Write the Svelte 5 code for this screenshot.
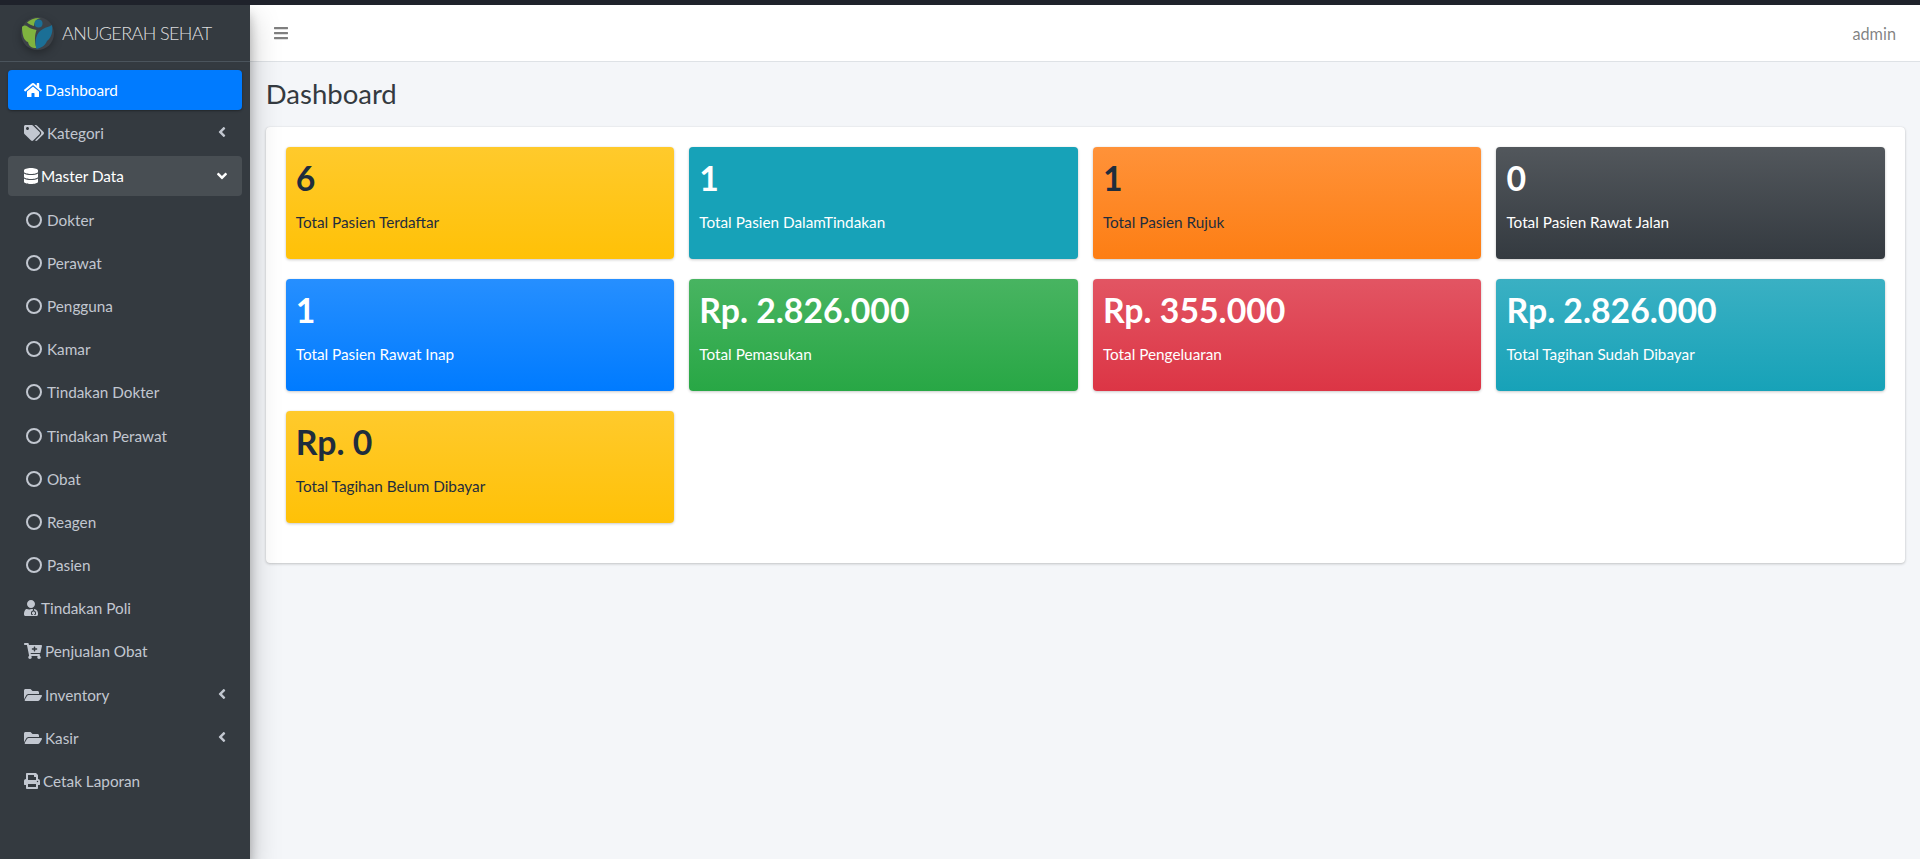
<script>
  const icons = {
    home: 'M280.37 148.26L96 300.11V464a16 16 0 0 0 16 16l112.06-.29a16 16 0 0 0 15.92-16V368a16 16 0 0 1 16-16h64a16 16 0 0 1 16 16v95.64a16 16 0 0 0 16 16.05L464 480a16 16 0 0 0 16-16V300L295.67 148.26a12.19 12.19 0 0 0-15.3 0zM571.6 251.47L488 182.56V44.05a12 12 0 0 0-12-12h-56a12 12 0 0 0-12 12v72.61L318.47 43a48 48 0 0 0-61 0L4.34 251.47a12 12 0 0 0-1.6 16.9l25.5 31A12 12 0 0 0 45.15 301l235.22-193.74a12.19 12.19 0 0 1 15.3 0L530.9 301a12 12 0 0 0 16.9-1.6l25.5-31a12 12 0 0 0-1.7-16.93z',
    tags: 'M497.941 225.941L286.059 14.059A48 48 0 0 0 252.118 0H48C21.49 0 0 21.49 0 48v204.118a48 48 0 0 0 14.059 33.941l211.882 211.882c18.744 18.745 49.136 18.746 67.882 0l204.118-204.118c18.745-18.745 18.745-49.137 0-67.882zM112 160c-26.51 0-48-21.49-48-48s21.49-48 48-48 48 21.49 48 48-21.49 48-48 48zm513.941 133.823L421.823 497.941c-18.745 18.745-49.137 18.745-67.882 0l-.36-.36L527.64 323.522c16.999-16.999 26.36-39.6 26.36-63.64s-9.362-46.641-26.36-63.64L331.397 0h48.721a48 48 0 0 1 33.941 14.059l211.882 211.882c18.745 18.745 18.745 49.137 0 67.882z',
    db: 'M448 73.143v45.714C448 159.143 347.667 192 224 192S0 159.143 0 118.857V73.143C0 32.857 100.333 0 224 0s224 32.857 224 73.143zM448 176v102.857C448 319.143 347.667 352 224 352S0 319.143 0 278.857V176c48.125 33.143 136.208 48.572 224 48.572S399.874 209.143 448 176zm0 160v102.857C448 479.143 347.667 512 224 512S0 479.143 0 438.857V336c48.125 33.143 136.208 48.572 224 48.572S399.874 369.143 448 336z',
    doctor: 'M224 256c70.7 0 128-57.3 128-128S294.7 0 224 0 96 57.3 96 128s57.3 128 128 128zM104 424c0 13.3 10.7 24 24 24s24-10.7 24-24-10.7-24-24-24-24 10.7-24 24zm216-135.4v49c36.5 7.4 64 39.8 64 78.4v41.7c0 7.6-5.4 14.2-12.9 15.7l-32.2 6.4c-4.3.9-8.5-1.9-9.4-6.3l-3.1-15.7c-.9-4.3 1.9-8.6 6.3-9.4l19.3-3.9V416c0-62.8-96-65.1-96 1.9v26.7l19.3 3.9c4.3.9 7.1 5.1 6.3 9.4l-3.1 15.7c-.9 4.3-5.1 7.1-9.4 6.3l-31.2-4.2c-7.9-1.1-13.8-7.8-13.8-15.9V416c0-38.6 27.5-70.9 64-78.4v-45.2c-11-3.5-22.3-6.4-34.2-6.4h-16.7c-22.2 10.2-46.9 16-72.9 16s-50.6-5.8-72.9-16h-16.7C60.2 288 0 348.2 0 422.4V464c0 26.5 21.5 48 48 48h352c26.5 0 48-21.5 48-48v-41.6c0-60.2-39.7-111-94-128.2z',
    cart: 'M504.717 320H211.572l6.545 32h268.418c15.401 0 26.816 14.301 23.403 29.319l-5.517 24.276C523.112 414.668 536 433.828 536 456c0 31.202-25.519 56.444-56.824 55.994-29.823-.429-54.35-24.631-55.155-54.447-.44-16.287 6.085-31.049 16.803-41.548H231.176C241.553 426.165 248 440.326 248 456c0 31.813-26.528 57.431-58.67 55.938-28.54-1.325-51.751-24.385-53.251-52.917-1.158-22.034 10.436-41.455 28.051-51.586L93.883 64H24C10.745 64 0 53.255 0 40V24C0 10.745 10.745 0 24 0h102.529c11.401 0 21.228 8.021 23.513 19.19L159.208 64H551.99c15.401 0 26.816 14.301 23.403 29.319l-47.273 208C525.637 312.246 515.923 320 504.717 320zM408 168h-48v-40c0-8.837-7.163-16-16-16h-16c-8.837 0-16 7.163-16 16v40h-48c-8.837 0-16 7.163-16 16v16c0 8.837 7.163 16 16 16h48v40c0 8.837 7.163 16 16 16h16c8.837 0 16-7.163 16-16v-40h48c8.837 0 16-7.163 16-16v-16c0-8.837-7.163-16-16-16z',
    folder: 'M572.694 292.093L500.27 416.248A63.997 63.997 0 0 1 444.989 448H45.025c-18.523 0-30.064-20.093-20.731-36.093l72.424-124.155A64 64 0 0 1 152 256h399.964c18.523 0 30.064 20.093 20.73 36.093zM152 224h328v-48c0-26.51-21.49-48-48-48H272l-64-64H48C21.49 64 0 85.49 0 112v278.046l69.077-118.418C86.214 242.25 117.989 224 152 224z',
    print: 'M448 192V77.25c0-8.49-3.37-16.62-9.37-22.63L393.37 9.37c-6-6-14.14-9.37-22.63-9.37H96C78.33 0 64 14.33 64 32v160c-35.35 0-64 28.65-64 64v112c0 8.84 7.16 16 16 16h48v96c0 17.67 14.33 32 32 32h320c17.67 0 32-14.33 32-32v-96h48c8.84 0 16-7.16 16-16V256c0-35.35-28.65-64-64-64zm-64 256H128v-96h256v96zm0-224H128V64h192v48c0 8.84 7.16 16 16 16h48v96zm48 72c-13.25 0-24-10.75-24-24 0-13.26 10.75-24 24-24s24 10.74 24 24c0 13.25-10.75 24-24 24z'
  };
  const viewBoxes = { home: '0 0 576 512', tags: '0 0 640 512', db: '0 0 448 512', doctor: '0 0 448 512', cart: '0 0 576 512', folder: '0 0 576 512', print: '0 0 512 512' };

  const nav = [
    { label: 'Dashboard', icon: 'home', state: 'active' },
    { label: 'Kategori', icon: 'tags', arrow: 'left' },
    { label: 'Master Data', icon: 'db', arrow: 'down', state: 'open' },
    ...['Dokter', 'Perawat', 'Pengguna', 'Kamar', 'Tindakan Dokter', 'Tindakan Perawat', 'Obat', 'Reagen', 'Pasien'].map((label) => ({ label, circle: true })),
    { label: 'Tindakan Poli', icon: 'doctor' },
    { label: 'Penjualan Obat', icon: 'cart' },
    { label: 'Inventory', icon: 'folder', arrow: 'left' },
    { label: 'Kasir', icon: 'folder', arrow: 'left' },
    { label: 'Cetak Laporan', icon: 'print' }
  ];

  const boxes = [
    { value: '6', label: 'Total Pasien Terdaftar', tone: 'warning' },
    { value: '1', label: 'Total Pasien DalamTindakan', tone: 'info' },
    { value: '1', label: 'Total Pasien Rujuk', tone: 'orange' },
    { value: '0', label: 'Total Pasien Rawat Jalan', tone: 'dark' },
    { value: '1', label: 'Total Pasien Rawat Inap', tone: 'primary' },
    { value: 'Rp. 2.826.000', label: 'Total Pemasukan', tone: 'success' },
    { value: 'Rp. 355.000', label: 'Total Pengeluaran', tone: 'danger' },
    { value: 'Rp. 2.826.000', label: 'Total Tagihan Sudah Dibayar', tone: 'info2' },
    { value: 'Rp. 0', label: 'Total Tagihan Belum Dibayar', tone: 'warning' }
  ];
</script>

<div class="strip"></div>
<div class="shell">
  <aside class="sidebar">
    <div class="brand">
      <svg class="logo" viewBox="0 0 33 33" aria-hidden="true">
        <circle cx="16.5" cy="16.5" r="16.5" fill="#3d4248" />
        <path d="M1 10 C2.5 8 5 8 6.5 9.5 C8 11 11 12 15.5 13 C14 17 13 24 15.5 31 C10 31 8 29 7 25 C3 24 1 18 1 10 Z" fill="#7fb33f" />
        <path d="M6 5.5 C9 2.5 14 0.5 20 1 C16 1.5 13.5 4 13 9 C11 8.5 8 7.5 6 5.5 Z" fill="#7fb33f" />
        <path d="M31 8 C32 14 31 20 26 24 C24 29 20 31 15.5 32 C13 24 15.5 15 22 12 C25 10 28 10 31 8 Z" fill="#1b6f96" />
        <circle cx="17.5" cy="6.5" r="4" fill="#1b6f96" />
      </svg>
      <span class="brand-text">ANUGERAH SEHAT</span>
    </div>
    <nav class="nav">
      {#each nav as item}
        <a class="link {item.state ?? ''}" href="#top">
          {#if item.circle}
            <span class="circle"></span>
          {:else}
            <svg class="ico" viewBox={viewBoxes[item.icon]} aria-hidden="true"><path d={icons[item.icon]} /></svg>
          {/if}
          <span>{item.label}</span>
          {#if item.arrow === 'left'}
            <svg class="arrow" viewBox="0 0 256 512" aria-hidden="true"><path d="M31.7 239l136-136c9.4-9.4 24.6-9.4 33.9 0l22.6 22.6c9.4 9.4 9.4 24.6 0 33.9L127.9 256l96.4 96.4c9.4 9.4 9.4 24.6 0 33.9L201.7 409c-9.4 9.4-24.6 9.4-33.9 0l-136-136c-9.5-9.4-9.5-24.6-.1-34z" /></svg>
          {:else if item.arrow === 'down'}
            <svg class="arrow down" viewBox="0 0 320 512" aria-hidden="true"><path d="M143 352.3L7 216.3c-9.4-9.4-9.4-24.6 0-33.9l22.6-22.6c9.4-9.4 24.6-9.4 33.9 0l96.4 96.4 96.4-96.4c9.4-9.4 24.6-9.4 33.9 0l22.6 22.6c9.4 9.4 9.4 24.6 0 33.9l-136 136c-9.2 9.4-24.4 9.4-33.8 0z" /></svg>
          {/if}
        </a>
      {/each}
    </nav>
  </aside>
  <div class="main">
    <header class="topbar">
      <svg class="bars" viewBox="0 0 448 512" aria-hidden="true"><path d="M16 132h416c8.837 0 16-7.163 16-16V76c0-8.837-7.163-16-16-16H16C7.163 60 0 67.163 0 76v40c0 8.837 7.163 16 16 16zm0 160h416c8.837 0 16-7.163 16-16v-40c0-8.837-7.163-16-16-16H16c-8.837 0-16 7.163-16 16v40c0 8.837 7.163 16 16 16zm0 160h416c8.837 0 16-7.163 16-16v-40c0-8.837-7.163-16-16-16H16c-8.837 0-16 7.163-16 16v40c0 8.837 7.163 16 16 16z" /></svg>
      <span class="admin">admin</span>
    </header>
    <main class="content">
      <h1>Dashboard</h1>
      <section class="card">
        {#each boxes as box}
          <div class="box {box.tone}">
            <h3>{box.value}</h3>
            <p>{box.label}</p>
          </div>
        {/each}
      </section>
    </main>
  </div>
</div>

<style>
  :global(body) { margin: 0; background: #f4f6f9; font-family: "Lato", sans-serif; }
  * { box-sizing: border-box; }
  .strip { height: 5px; background: #1f222b; }
  .shell { display: flex; height: 854px; overflow: hidden; }
  .sidebar { width: 250px; flex: none; background: #343a40; box-shadow: 0 14px 28px rgba(0,0,0,.25), 0 10px 10px rgba(0,0,0,.22); position: relative; z-index: 2; }
  .brand { height: 57px; display: flex; align-items: center; padding-left: 21px; border-bottom: 1px solid #4b545c; gap: 8px; }
  .logo { width: 33px; height: 33px; flex: none; filter: drop-shadow(0 3px 4px rgba(0,0,0,.3)); }
  .brand-text { font-weight: 300; font-size: 18px; letter-spacing: -0.6px; color: rgba(255,255,255,.85); white-space: nowrap; }
  .nav { padding: 8px 8px 0; display: flex; flex-direction: column; gap: 3.2px; }
  .link { height: 40px; display: flex; align-items: center; padding: 0 16px; border-radius: 4px; color: #c2c7d0; text-decoration: none; font-size: 15.3px; position: relative; }
  .link.active { background: #007bff; color: #fff; box-shadow: 0 1px 3px rgba(0,0,0,.12), 0 1px 2px rgba(0,0,0,.24); }
  .link.open { background: rgba(255,255,255,.1); color: #fff; }
  .ico { height: 16px; width: auto; fill: currentColor; margin-right: 3px; flex: none; }
  .circle { width: 16px; height: 16px; border: 2px solid currentColor; border-radius: 50%; margin: 0 5px 0 2px; flex: none; }
  .arrow { position: absolute; right: 16px; top: 11px; height: 16px; width: auto; fill: currentColor; }
  .arrow.down { right: 15px; top: 12px; }
  .main { flex: 1; min-width: 0; display: flex; flex-direction: column; }
  .topbar { height: 57px; flex: none; background: #fff; border-bottom: 1px solid #dee2e6; display: flex; align-items: center; justify-content: space-between; padding: 0 24px; }
  .bars { width: 14px; height: 16px; fill: rgba(0,0,0,.5); }
  .admin { font-size: 16.3px; color: rgba(0,0,0,.5); }
  .content { padding: 0 15px 0 15.75px; flex: 1; }
  h1 { margin: 0; padding: 15px 0 0; height: 65px; font: 400 27.5px/1.25 "Lato", sans-serif; color: #343a40; }
  .card { background: #fff; border-radius: 4px; box-shadow: 0 0 1px rgba(0,0,0,.125), 0 1px 3px rgba(0,0,0,.2); padding: 20px 20px 1px; display: grid; grid-template-columns: repeat(4, 1fr); column-gap: 15px; height: 436px; align-content: start; }
  .box { height: 112px; margin-bottom: 20px; border-radius: 4px; padding: 10px; box-shadow: 0 0 1px rgba(0,0,0,.125), 0 1px 3px rgba(0,0,0,.2); color: #fff; }
  .box h3 { margin: 0 0 10px; font: 700 33.8px/42px "Lato", sans-serif; white-space: nowrap; }
  .box p { margin: 0; font: 400 15.3px/24px "Lato", sans-serif; padding-top: 1px; }
  .warning { background: linear-gradient(180deg, #ffca2c, #ffc107); color: #1f2d3d; }
  .info { background: #17a2b8; }
  .orange { background: linear-gradient(180deg, #ff9239, #fd7e14); color: #1f2d3d; }
  .dark { background: linear-gradient(180deg, #52575c, #343a40); }
  .primary { background: linear-gradient(180deg, #268fff, #007bff); }
  .success { background: linear-gradient(180deg, #48b461, #28a745); }
  .danger { background: linear-gradient(180deg, #e25563, #dc3545); }
  .info2 { background: linear-gradient(180deg, #3ab0c3, #17a2b8); }
</style>
